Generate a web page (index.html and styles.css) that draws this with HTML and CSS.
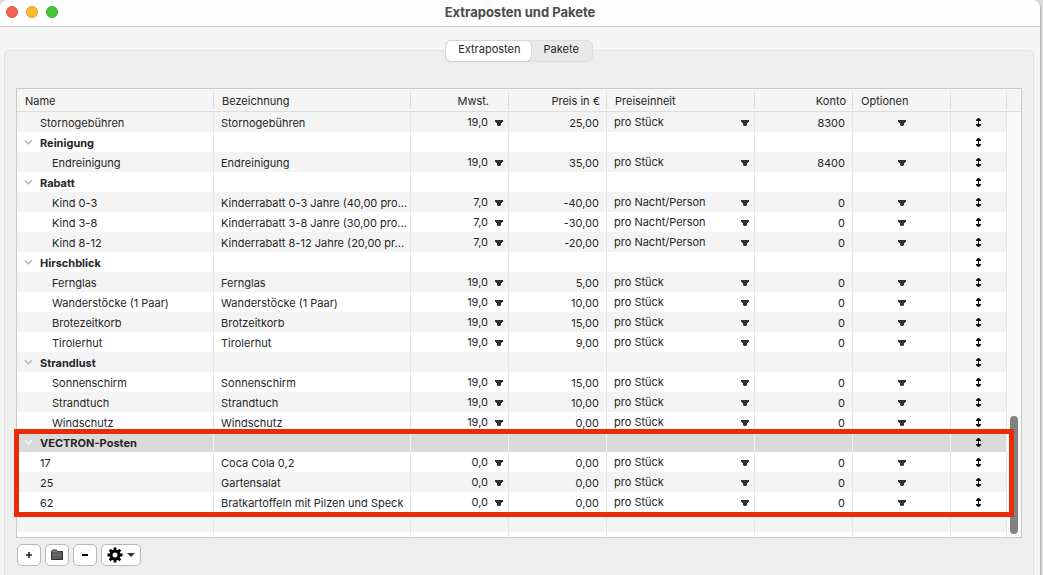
FILE: index.html
```html
<!DOCTYPE html>
<html lang="de">
<head>
<meta charset="utf-8">
<title>Extraposten und Pakete</title>
<link rel="stylesheet" href="styles.css">
</head>
<body>
<svg class="sprite" aria-hidden="true">
  <symbol id="chevron" viewBox="0 0 10 6"><path d="M1 1l4 4 4-4" fill="none" stroke="currentColor" stroke-width="1.3"/></symbol>
  <symbol id="updown" viewBox="0 0 7 9"><path d="M3 0h1l2 2v1H4v3h2v1L4 9H3L1 7V6h2V3H1V2z" fill="currentColor"/></symbol>
</svg>
<div class="window">
  <header class="titlebar">
    <div class="lights">
      <button class="light light-close" aria-label="Schließen"></button>
      <button class="light light-min" aria-label="Minimieren"></button>
      <button class="light light-max" aria-label="Maximieren"></button>
    </div>
    <h1 class="title">Extraposten und Pakete</h1>
  </header>
  <main class="content">
    <div class="tabs" role="tablist">
      <button class="tab tab-active" role="tab" aria-selected="true">Extraposten</button>
      <button class="tab" role="tab" aria-selected="false">Pakete</button>
    </div>
    <section class="panel">
      <div class="frame">
        <table class="items">
          <colgroup><col class="c-name"><col><col class="c-num"><col class="c-num"><col class="c-unit"><col class="c-num"><col class="c-num"><col class="c-sort"><col class="c-gutter"></colgroup>
          <thead>
            <tr><th>Name</th><th>Bezeichnung</th><th class="vat">Mwst.</th><th class="num">Preis in €</th><th>Preiseinheit</th><th class="num">Konto</th><th>Optionen</th><th></th><th></th></tr>
          </thead>
          <tbody>
            <tr><td class="top">Stornogebühren</td><td>Stornogebühren</td><td class="pick"><select class="vat-select" aria-label="Mwst."><option>19,0</option></select></td><td class="num">25,00</td><td class="pick"><select class="unit-select" aria-label="Preiseinheit"><option>pro Stück</option></select></td><td class="num">8300</td><td class="pick"><button class="options" aria-label="Optionen"></button></td><td class="sort"><svg class="updown"><use href="#updown"/></svg></td><td></td></tr>
            <tr class="group"><td><button class="toggle" aria-label="Einklappen"><svg class="chevron"><use href="#chevron"/></svg></button>Reinigung</td><td></td><td></td><td></td><td></td><td></td><td></td><td class="sort"><svg class="updown"><use href="#updown"/></svg></td><td></td></tr>
            <tr><td class="child">Endreinigung</td><td>Endreinigung</td><td class="pick"><select class="vat-select" aria-label="Mwst."><option>19,0</option></select></td><td class="num">35,00</td><td class="pick"><select class="unit-select" aria-label="Preiseinheit"><option>pro Stück</option></select></td><td class="num">8400</td><td class="pick"><button class="options" aria-label="Optionen"></button></td><td class="sort"><svg class="updown"><use href="#updown"/></svg></td><td></td></tr>
            <tr class="group"><td><button class="toggle" aria-label="Einklappen"><svg class="chevron"><use href="#chevron"/></svg></button>Rabatt</td><td></td><td></td><td></td><td></td><td></td><td></td><td class="sort"><svg class="updown"><use href="#updown"/></svg></td><td></td></tr>
            <tr><td class="child">Kind 0-3</td><td>Kinderrabatt 0-3 Jahre (40,00 pro...</td><td class="pick"><select class="vat-select" aria-label="Mwst."><option>7,0</option></select></td><td class="num">-40,00</td><td class="pick"><select class="unit-select" aria-label="Preiseinheit"><option>pro Nacht/Person</option></select></td><td class="num">0</td><td class="pick"><button class="options" aria-label="Optionen"></button></td><td class="sort"><svg class="updown"><use href="#updown"/></svg></td><td></td></tr>
            <tr><td class="child">Kind 3-8</td><td>Kinderrabatt 3-8 Jahre (30,00 pro...</td><td class="pick"><select class="vat-select" aria-label="Mwst."><option>7,0</option></select></td><td class="num">-30,00</td><td class="pick"><select class="unit-select" aria-label="Preiseinheit"><option>pro Nacht/Person</option></select></td><td class="num">0</td><td class="pick"><button class="options" aria-label="Optionen"></button></td><td class="sort"><svg class="updown"><use href="#updown"/></svg></td><td></td></tr>
            <tr><td class="child">Kind 8-12</td><td>Kinderrabatt 8-12 Jahre (20,00 pr...</td><td class="pick"><select class="vat-select" aria-label="Mwst."><option>7,0</option></select></td><td class="num">-20,00</td><td class="pick"><select class="unit-select" aria-label="Preiseinheit"><option>pro Nacht/Person</option></select></td><td class="num">0</td><td class="pick"><button class="options" aria-label="Optionen"></button></td><td class="sort"><svg class="updown"><use href="#updown"/></svg></td><td></td></tr>
            <tr class="group"><td><button class="toggle" aria-label="Einklappen"><svg class="chevron"><use href="#chevron"/></svg></button>Hirschblick</td><td></td><td></td><td></td><td></td><td></td><td></td><td class="sort"><svg class="updown"><use href="#updown"/></svg></td><td></td></tr>
            <tr><td class="child">Fernglas</td><td>Fernglas</td><td class="pick"><select class="vat-select" aria-label="Mwst."><option>19,0</option></select></td><td class="num">5,00</td><td class="pick"><select class="unit-select" aria-label="Preiseinheit"><option>pro Stück</option></select></td><td class="num">0</td><td class="pick"><button class="options" aria-label="Optionen"></button></td><td class="sort"><svg class="updown"><use href="#updown"/></svg></td><td></td></tr>
            <tr><td class="child">Wanderstöcke (1 Paar)</td><td>Wanderstöcke (1 Paar)</td><td class="pick"><select class="vat-select" aria-label="Mwst."><option>19,0</option></select></td><td class="num">10,00</td><td class="pick"><select class="unit-select" aria-label="Preiseinheit"><option>pro Stück</option></select></td><td class="num">0</td><td class="pick"><button class="options" aria-label="Optionen"></button></td><td class="sort"><svg class="updown"><use href="#updown"/></svg></td><td></td></tr>
            <tr><td class="child">Brotezeitkorb</td><td>Brotzeitkorb</td><td class="pick"><select class="vat-select" aria-label="Mwst."><option>19,0</option></select></td><td class="num">15,00</td><td class="pick"><select class="unit-select" aria-label="Preiseinheit"><option>pro Stück</option></select></td><td class="num">0</td><td class="pick"><button class="options" aria-label="Optionen"></button></td><td class="sort"><svg class="updown"><use href="#updown"/></svg></td><td></td></tr>
            <tr><td class="child">Tirolerhut</td><td>Tirolerhut</td><td class="pick"><select class="vat-select" aria-label="Mwst."><option>19,0</option></select></td><td class="num">9,00</td><td class="pick"><select class="unit-select" aria-label="Preiseinheit"><option>pro Stück</option></select></td><td class="num">0</td><td class="pick"><button class="options" aria-label="Optionen"></button></td><td class="sort"><svg class="updown"><use href="#updown"/></svg></td><td></td></tr>
            <tr class="group"><td><button class="toggle" aria-label="Einklappen"><svg class="chevron"><use href="#chevron"/></svg></button>Strandlust</td><td></td><td></td><td></td><td></td><td></td><td></td><td class="sort"><svg class="updown"><use href="#updown"/></svg></td><td></td></tr>
            <tr><td class="child">Sonnenschirm</td><td>Sonnenschirm</td><td class="pick"><select class="vat-select" aria-label="Mwst."><option>19,0</option></select></td><td class="num">15,00</td><td class="pick"><select class="unit-select" aria-label="Preiseinheit"><option>pro Stück</option></select></td><td class="num">0</td><td class="pick"><button class="options" aria-label="Optionen"></button></td><td class="sort"><svg class="updown"><use href="#updown"/></svg></td><td></td></tr>
            <tr><td class="child">Strandtuch</td><td>Strandtuch</td><td class="pick"><select class="vat-select" aria-label="Mwst."><option>19,0</option></select></td><td class="num">10,00</td><td class="pick"><select class="unit-select" aria-label="Preiseinheit"><option>pro Stück</option></select></td><td class="num">0</td><td class="pick"><button class="options" aria-label="Optionen"></button></td><td class="sort"><svg class="updown"><use href="#updown"/></svg></td><td></td></tr>
            <tr><td class="child">Windschutz</td><td>Windschutz</td><td class="pick"><select class="vat-select" aria-label="Mwst."><option>19,0</option></select></td><td class="num">0,00</td><td class="pick"><select class="unit-select" aria-label="Preiseinheit"><option>pro Stück</option></select></td><td class="num">0</td><td class="pick"><button class="options" aria-label="Optionen"></button></td><td class="sort"><svg class="updown"><use href="#updown"/></svg></td><td></td></tr>
            <tr class="group selected"><td><button class="toggle" aria-label="Einklappen"><svg class="chevron"><use href="#chevron"/></svg></button>VECTRON-Posten</td><td></td><td></td><td></td><td></td><td></td><td></td><td class="sort"><svg class="updown"><use href="#updown"/></svg></td><td></td></tr>
            <tr><td class="top">17</td><td>Coca Cola 0,2</td><td class="pick"><select class="vat-select" aria-label="Mwst."><option>0,0</option></select></td><td class="num">0,00</td><td class="pick"><select class="unit-select" aria-label="Preiseinheit"><option>pro Stück</option></select></td><td class="num">0</td><td class="pick"><button class="options" aria-label="Optionen"></button></td><td class="sort"><svg class="updown"><use href="#updown"/></svg></td><td></td></tr>
            <tr><td class="top">25</td><td>Gartensalat</td><td class="pick"><select class="vat-select" aria-label="Mwst."><option>0,0</option></select></td><td class="num">0,00</td><td class="pick"><select class="unit-select" aria-label="Preiseinheit"><option>pro Stück</option></select></td><td class="num">0</td><td class="pick"><button class="options" aria-label="Optionen"></button></td><td class="sort"><svg class="updown"><use href="#updown"/></svg></td><td></td></tr>
            <tr><td class="top">62</td><td>Bratkartoffeln mit Pilzen und Speck</td><td class="pick"><select class="vat-select" aria-label="Mwst."><option>0,0</option></select></td><td class="num">0,00</td><td class="pick"><select class="unit-select" aria-label="Preiseinheit"><option>pro Stück</option></select></td><td class="num">0</td><td class="pick"><button class="options" aria-label="Optionen"></button></td><td class="sort"><svg class="updown"><use href="#updown"/></svg></td><td></td></tr>
            <tr><td></td><td></td><td></td><td></td><td></td><td></td><td></td><td></td><td></td></tr>
            <tr class="rest"><td></td><td></td><td></td><td></td><td></td><td></td><td></td><td></td><td></td></tr>
          </tbody>
        </table>
        <div class="scroll-thumb"></div>
        <div class="highlight"></div>
      </div>
      <div class="toolbar">
        <button class="tool" aria-label="Hinzufügen"><svg width="8" height="8" viewBox="0 0 8 8"><path d="M4 1v6M1 4h6" stroke="#222" stroke-width="1.6"/></svg></button>
        <button class="tool" aria-label="Neue Gruppe"><svg width="14" height="12" viewBox="0 0 14 12"><defs><linearGradient id="fold" x1="0" y1="0" x2="0" y2="1"><stop offset="0" stop-color="#858585"/><stop offset="1" stop-color="#505050"/></linearGradient></defs><path d="M1.5 10.5v-8l1-1.5h4l1 1.5h5v8z" fill="url(#fold)" stroke="#333"/><path d="M2 4h10" stroke="#444"/></svg></button>
        <button class="tool" aria-label="Entfernen"><svg width="8" height="8" viewBox="0 0 8 8"><path d="M1 4h6" stroke="#000" stroke-width="2"/></svg></button>
        <button class="tool tool-wide" aria-label="Aktionen"><svg width="16" height="16" viewBox="0 0 16 16"><circle cx="8" cy="8" r="4" fill="none" stroke="#000" stroke-width="3"/><path d="M8 .5v3M8 12.500v3M.5 8h3M12.500 8h3M2.700 2.700l2.100 2.100M11.200 11.200l2.100 2.100M13.300 2.700l-2.100 2.100M4.800 11.200l-2.100 2.100" stroke="#000" stroke-width="2.800"/></svg><svg width="8" height="4" viewBox="0 0 8 4"><path d="M0 0h8L4 4z" fill="#333"/></svg></button>
      </div>
    </section>
  </main>
</div>
</body>
</html>
```
FILE: styles.css
```css
* { box-sizing: border-box; }
body {
  margin: 0;
  background: #dcdcdc;
  font: 11px/14px Inter, "Liberation Sans", sans-serif;
  color: #262626;
}
button, select { margin: 0; padding: 0; border: 0; background: none; font: inherit; color: inherit; }
.sprite { position: absolute; width: 0; height: 0; }

.window {
  display: flex;
  flex-direction: column;
  min-height: 100vh;
  margin-right: 2px;
  border-right: 1px solid #b4b4b4;
  border-radius: 8px 8px 0 0;
  background: #f5f5f5;
  overflow: hidden;
}
.titlebar {
  display: grid;
  grid-template-columns: 1fr auto 1fr;
  align-items: center;
  height: 27px;
  padding: 0 6px 2px;
  border-bottom: 1px solid #cfcfcf;
  background: #fdfdfd;
}
.lights { display: flex; gap: 8px; }
.light { width: 12px; height: 12px; border: 1px solid; border-radius: 50%; }
.light-close { background: #f95f57; border-color: #e14c45; }
.light-min { background: #fbb92c; border-color: #e0a020; }
.light-max { background: #45c63e; border-color: #32ad2d; }
.title { margin: 0; font-size: 13px; line-height: 16px; font-weight: 700; color: #4b4b4b; }

.content { display: flex; flex-direction: column; flex: 1; padding: 13px 6px 0 4px; }
.tabs {
  position: relative;
  z-index: 1;
  display: flex;
  align-self: center;
  height: 22px;
  margin-bottom: -12px;
  border: 1px solid #dedede;
  border-radius: 6px;
  background: #e9e9e9;
}
.tab { padding: 0 13px 4px 12px; border-radius: 5px; }
.tab-active { padding: 0 11px 4px 12px; background: #fff; box-shadow: 0 0 0 1px #d4d4d4, 0 1px 1px 0 #bbb; }

.panel {
  flex: 1;
  padding: 37px 11px 8px 11px;
  border: 1px solid #e3e3e3;
  border-bottom: 0;
  border-radius: 5px 5px 0 0;
  background: #eee;
}
.frame { position: relative; border: 1px solid #c9c9c9; background: #fafafa; }

.items { width: 100%; table-layout: fixed; border-collapse: separate; border-spacing: 0; }
.c-name { width: 197px; }
.c-num { width: 98px; }
.c-unit { width: 148px; }
.c-sort { width: 56px; }
.c-gutter { width: 14px; }
th {
  height: 23px;
  padding: 2px 8px 0;
  border-bottom: 1px solid #dedede;
  background: linear-gradient(#dcdcdc, #dcdcdc) right 3px / 1px 17px no-repeat #f5f5f5;
  font-weight: 400;
  text-align: left;
}
th:last-child { background: #f5f5f5; }
td {
  height: 20px;
  padding: 2px 0 0 7px;
  border-right: 1px solid #e6e6e6;
  background: #fff;
  white-space: nowrap;
  overflow: hidden;
}
tbody tr:nth-child(odd) td { background: #f4f4f4; }
tbody tr.selected td { background: #dadada; border-color: #f0f0f0; }
tbody tr td:last-child, tbody tr.selected td:last-child { border: 0; background: #fafafa; }
tr.rest td { height: 5px; padding: 0; }
.num { text-align: right; padding-left: 0; padding-right: 7px; }
th.vat { text-align: right; padding-right: 20px; }
td.top { padding-left: 23px; }
td.child { padding-left: 35px; }
.group td { font-weight: 700; }
.toggle { display: inline-flex; width: 16px; height: 10px; vertical-align: middle; }
.chevron { width: 9px; height: 6px; color: #aaa; }
.selected .chevron { color: #fff; }

td.pick { padding: 0; }
td.pick select, .options {
  display: block;
  width: 100%;
  height: 18px;
  appearance: none;
  background: url("data:image/svg+xml,%3Csvg xmlns='http://www.w3.org/2000/svg' width='8' height='6'%3E%3Cpath d='M0 0h8v2H7v1H6v2L5 6H3L2 5V3H1V2H0z' fill='%23303030'/%3E%3C/svg%3E") right 5px top 7px no-repeat;
}
td.pick .vat-select { padding-right: 20px; text-align-last: right; }
td.pick .unit-select { padding-left: 7px; }
td.pick .options { background-position: center top 7px; }
td.sort { padding: 0; text-align: center; }
.updown { display: block; width: 7px; height: 9px; margin: 0 auto; color: #000; }

.scroll-thumb {
  position: absolute;
  right: 3px;
  bottom: 3px;
  width: 8px;
  height: 118px;
  border-radius: 4px;
  background: #828282;
}
.highlight {
  position: absolute;
  left: -3px;
  right: 7px;
  bottom: 20px;
  height: 88px;
  border: 5px solid #ea2b0a;
  pointer-events: none;
}

.toolbar { display: flex; gap: 4px; padding: 6px 0 0 1px; }
.tool {
  display: flex;
  align-items: center;
  justify-content: center;
  gap: 4px;
  width: 24px;
  height: 22px;
  border: 1px solid #b9b9b9;
  border-radius: 5px;
  background: #fff;
}
.tool-wide { width: 40px; }
```
